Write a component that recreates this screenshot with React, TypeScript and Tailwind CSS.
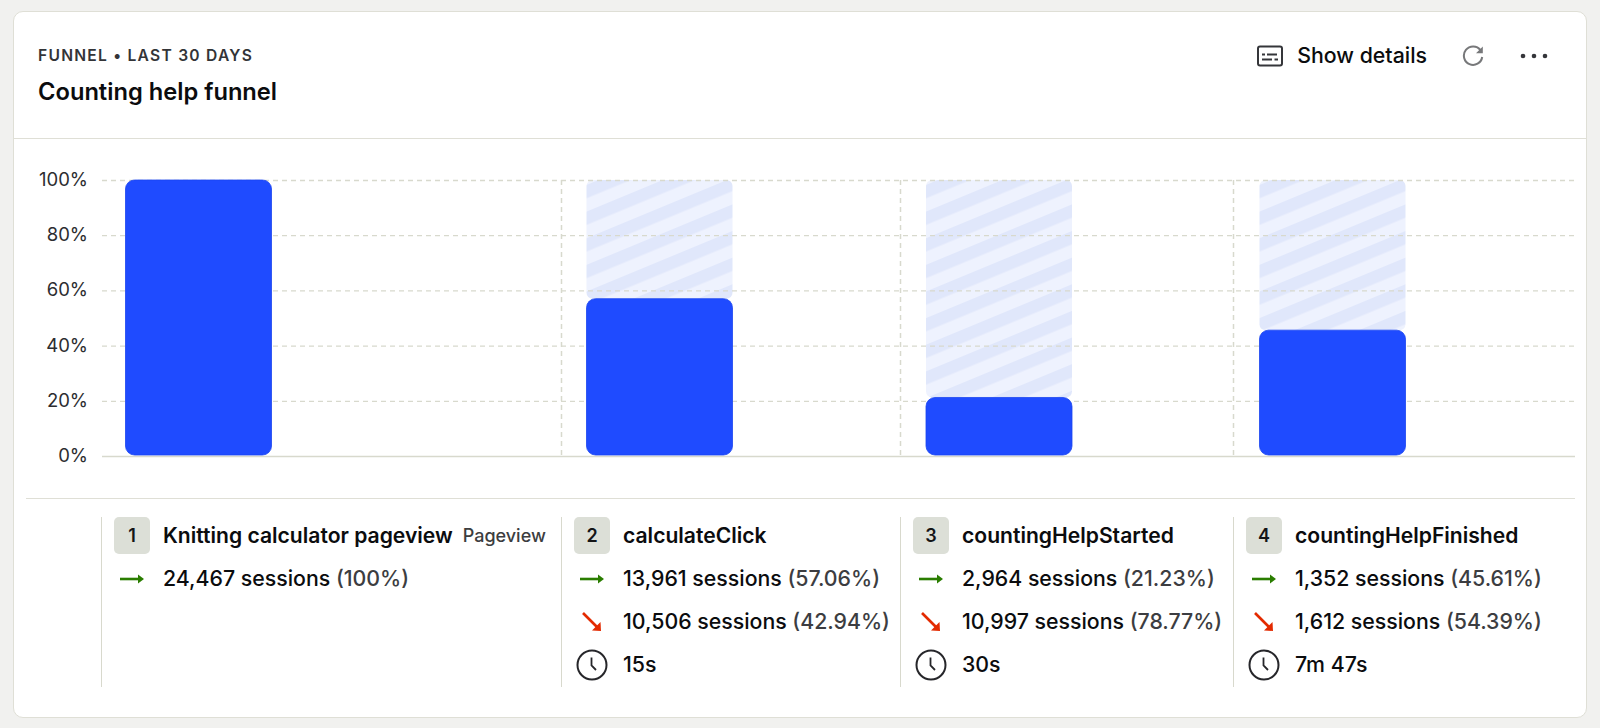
const font = { fontFamily: "Inter, 'Liberation Sans', sans-serif" };

function Arrow() {
  return (
    <svg width="26" height="14" viewBox="0 0 26 14" className="text-[#2a7d00]">
      <path d="M1 7H20" stroke="currentColor" strokeWidth="2.6" fill="none" />
      <path d="M19 2.5L25 7L19 11.5Z" fill="currentColor" />
    </svg>
  );
}

function DownArrow() {
  return (
    <svg width="22" height="22" viewBox="0 0 22 22">
      <path d="M2 2L17 17" stroke="#e32a00" strokeWidth="2.6" fill="none" />
      <path d="M20 20L19.5 11L11 19.5Z" fill="#e32a00" />
    </svg>
  );
}

function ClockIcon() {
  return (
    <svg width="32" height="32" viewBox="0 0 32 32" fill="none" stroke="#26262a" strokeWidth="2">
      <circle cx="16" cy="16" r="14.5" />
      <path d="M15.5 8.5V16.5L20 21" strokeWidth="1.8" />
    </svg>
  );
}

function DetailsIcon() {
  return (
    <svg width="26" height="22" viewBox="0 0 26 22" fill="none" stroke="#35363a" strokeWidth="2">
      <rect x="1" y="1.5" width="24" height="19" rx="2" />
      <path d="M5 9.5H8M10 9.5H20M5 14.5H15M17.5 14.5H21" />
    </svg>
  );
}

function RefreshIcon() {
  return (
    <svg width="22" height="22" viewBox="0 0 22 22" fill="none">
      <path d="M18.5 5.2A9.2 9.2 0 1 0 20.2 12" stroke="#77787a" strokeWidth="2" />
      <path d="M20.8 1.4V8.2H14Z" fill="#77787a" />
    </svg>
  );
}

function MoreIcon() {
  return (
    <svg width="28" height="6" viewBox="0 0 28 6" fill="#35363a">
      <circle cx="3" cy="3" r="2.3" />
      <circle cx="14" cy="3" r="2.3" />
      <circle cx="25" cy="3" r="2.3" />
    </svg>
  );
}

const yLabels = ["100%", "80%", "60%", "40%", "20%", "0%"];
const W = 1473;
const H = 276;
const bars = [
  { x: 23.5, pct: 100, ghost: false },
  { x: 484.5, pct: 57, ghost: true },
  { x: 824, pct: 21.2, ghost: true },
  { x: 1157.5, pct: 45.6, ghost: true },
];
const vLines = [459.5, 798.5, 1131.5];

function Chart() {
  return (
    <svg width={W} height={H + 2} viewBox={`0 0 ${W} ${H + 2}`} className="block overflow-visible">
      <defs>
        <pattern id="stripes" width="50" height="24.6" patternUnits="userSpaceOnUse" patternTransform="rotate(-22.5) translate(0 4.6)">
          <rect width="50" height="24.6" fill="#eef2fe" />
          <rect width="50" height="12.3" fill="#e0e7fb" />
        </pattern>
      </defs>
      {bars.filter((b) => b.ghost).map((b) => (
        <g key={b.x} transform={`translate(${b.x} 0)`}>
          <rect x={0} y={0} width={146} height={H * (1 - b.pct / 100)} rx={6} fill="url(#stripes)" />
        </g>
      ))}
      {[0, 1, 2, 3, 4].map((i) => (
        <line key={i} x1={0} x2={W} y1={(H * i) / 5 + 0.5} y2={(H * i) / 5 + 0.5} stroke="#d8d9cd" strokeWidth="1.3" strokeDasharray="5 4" />
      ))}
      <line x1={0} x2={W} y1={H + 0.5} y2={H + 0.5} stroke="#d8d9cd" strokeWidth="1.5" />
      {vLines.map((x) => (
        <line key={x} x1={x} x2={x} y1={0} y2={H} stroke="#d8d9cd" strokeWidth="1.5" strokeDasharray="5 4" />
      ))}
      {bars.map((b) => (
        <rect key={b.x} x={b.x} y={H * (1 - b.pct / 100)} width={146} height={(H * b.pct) / 100 - 1} rx={9} fill="#1f4bff" stroke="#1a45f0" strokeWidth="0.8" />
      ))}
    </svg>
  );
}

type Step = {
  n: number;
  name: string;
  tag?: string;
  go: [string, string];
  drop?: [string, string];
  time?: string;
};

const steps: Step[] = [
  { n: 1, name: "Knitting calculator pageview", tag: "Pageview", go: ["24,467 sessions", "(100%)"] },
  { n: 2, name: "calculateClick", go: ["13,961 sessions", "(57.06%)"], drop: ["10,506 sessions", "(42.94%)"], time: "15s" },
  { n: 3, name: "countingHelpStarted", go: ["2,964 sessions", "(21.23%)"], drop: ["10,997 sessions", "(78.77%)"], time: "30s" },
  { n: 4, name: "countingHelpFinished", go: ["1,352 sessions", "(45.61%)"], drop: ["1,612 sessions", "(54.39%)"], time: "7m 47s" },
];

function Row({ icon, children }: { icon: React.ReactNode; children: React.ReactNode }) {
  return (
    <div className="flex h-[43px] items-center whitespace-nowrap text-[21.3px] font-[450] text-[#0b0c0e]">
      <span className="flex w-[36px] justify-center">{icon}</span>
      <span className="ml-[13px]">{children}</span>
    </div>
  );
}

function Stat({ v }: { v: [string, string] }) {
  return (
    <>
      {v[0]} <span className="text-[#3c3d41]">{v[1]}</span>
    </>
  );
}

function Column({ s }: { s: Step }) {
  return (
    <div className="h-[170px] border-l-[1.5px] border-[#d8d9cd] pl-[12.5px]">
      <div className="mb-[3px] flex h-[37px] items-center whitespace-nowrap">
        <span className="flex h-[37px] w-[36px] items-center justify-center rounded-[5px] bg-[#dcdfd7] text-[18px] font-semibold text-[#141517]">
          {s.n}
        </span>
        <span className="ml-[13px] text-[21.1px] font-semibold text-[#0b0c0e]">{s.name}</span>
        {s.tag && <span className="ml-[10px] text-[18px] font-medium text-[#3c3d40]">{s.tag}</span>}
      </div>
      <Row icon={<Arrow />}>
        <Stat v={s.go} />
      </Row>
      {s.drop && (
        <Row icon={<DownArrow />}>
          <Stat v={s.drop} />
        </Row>
      )}
      {s.time && <Row icon={<ClockIcon />}>{s.time}</Row>}
    </div>
  );
}

export default function App() {
  return (
    <div style={font} className="h-[728px] w-[1600px] overflow-hidden bg-[#f1f1ef] pl-[13px] pr-[13px] pt-[11px]">
      <div className="h-[707px] rounded-[10px] border-[1.5px] border-[#dfdfd6] bg-white">
        <header className="flex h-[127px] items-start justify-between border-b-[1.5px] border-[#dfdfd6] pl-[24px] pr-[38px]">
          <div className="pt-[34px]">
            <div className="text-[15.6px] font-semibold leading-[20px] tracking-[1.25px] text-[#333437]">
              FUNNEL • LAST 30 DAYS
            </div>
            <h1 className="mt-[12px] text-[23.7px] font-semibold leading-[28px] text-[#0b0c0e]">Counting help funnel</h1>
          </div>
          <div className="flex h-[87px] items-center">
            <DetailsIcon />
            <span className="ml-[14px] text-[21.3px] font-[450] text-[#0b0c0e]">Show details</span>
            <span className="ml-[35px] flex"><RefreshIcon /></span>
            <span className="ml-[36px] flex"><MoreIcon /></span>
          </div>
        </header>
        <section className="flex h-[359px] pl-[24px] pt-[41px]">
          <div className="-mt-[1px] flex h-[276px] w-[50px] flex-col justify-between text-right text-[18.5px] leading-[0] text-[#2c2d30]">
            {yLabels.map((l) => (
              <span key={l} className="block h-0 whitespace-nowrap">{l}</span>
            ))}
          </div>
          <div className="ml-[14px]">
            <Chart />
          </div>
        </section>
        <section className="mx-[11.5px] grid grid-cols-[460px_339px_333px_341px] border-t-[1.5px] border-[#dfdfd6] pl-[75px] pt-[18px]">
          {steps.map((s) => (
            <Column key={s.n} s={s} />
          ))}
        </section>
      </div>
    </div>
  );
}
